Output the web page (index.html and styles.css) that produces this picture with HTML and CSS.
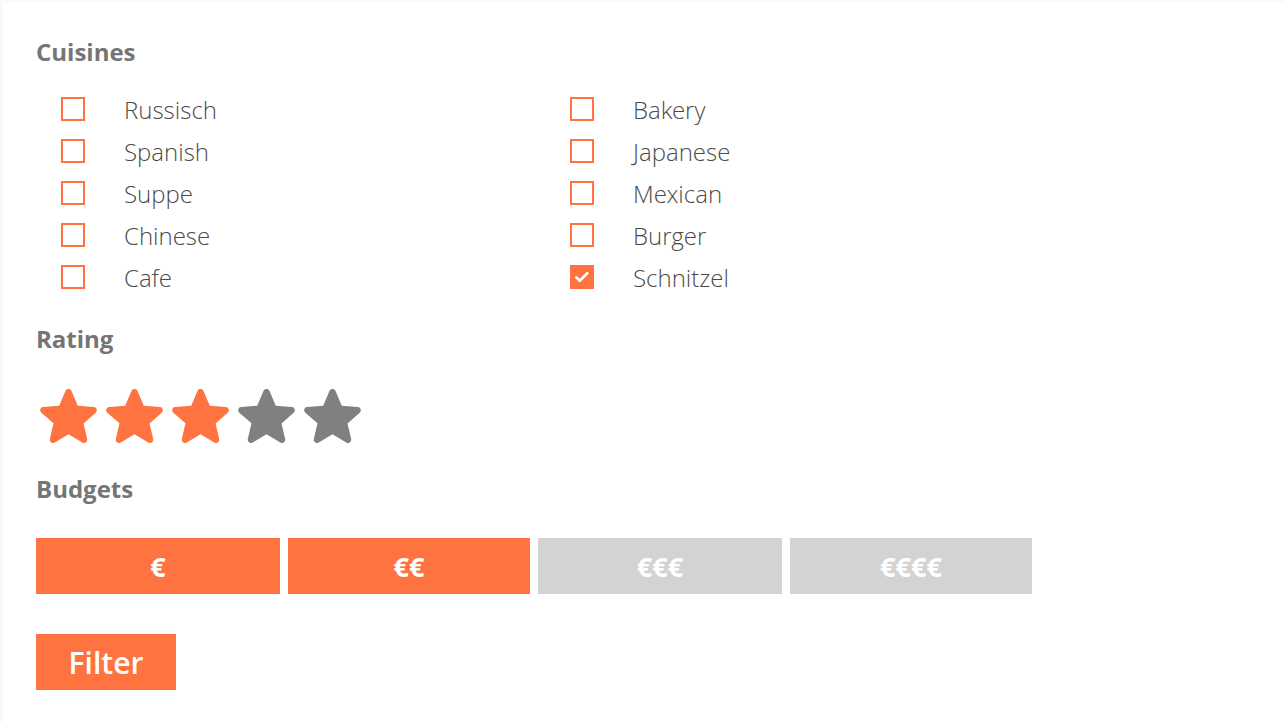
FILE: index.html
```html
<!DOCTYPE html>
<html>
<head>
<meta charset="utf-8">
<link rel="stylesheet" href="styles.css">
</head>
<body>
<div class="panel">
  <h2 class="title">Cuisines</h2>
  <div class="cuisines">
    <label class="opt"><span class="box"></span><span class="lbl">Russisch</span></label>
    <label class="opt"><span class="box"></span><span class="lbl">Bakery</span></label>
    <label class="opt"><span class="box"></span><span class="lbl">Spanish</span></label>
    <label class="opt"><span class="box"></span><span class="lbl">Japanese</span></label>
    <label class="opt"><span class="box"></span><span class="lbl">Suppe</span></label>
    <label class="opt"><span class="box"></span><span class="lbl">Mexican</span></label>
    <label class="opt"><span class="box"></span><span class="lbl">Chinese</span></label>
    <label class="opt"><span class="box"></span><span class="lbl">Burger</span></label>
    <label class="opt"><span class="box"></span><span class="lbl">Cafe</span></label>
    <label class="opt"><span class="box checked"><svg viewBox="0 0 24 24" width="18" height="18"><path d="M4.5 12.5l4.5 4.5 10-10" fill="none" stroke="#fff" stroke-width="3.6" stroke-linecap="round" stroke-linejoin="round"/></svg></span><span class="lbl">Schnitzel</span></label>
  </div>

  <h2 class="title rating-title">Rating</h2>
  <div class="stars">
    <svg class="star on" viewBox="3.4 3.6 17.2 16.3"><path d="M12 17.27l4.15 2.51c.76.46 1.69-.22 1.490-1.08l-1.1-4.72 3.67-3.18c.67-.58.31-1.68-.57-1.75l-4.83-.41-1.89-4.46c-.34-.81-1.5-.81-1.84 0L9.19 8.63l-4.83.41c-.88.07-1.24 1.17-.57 1.75l3.67 3.18-1.1 4.72c-.2.86.73 1.54 1.49 1.08l4.15-2.5z"/></svg>
    <svg class="star on" viewBox="3.4 3.6 17.2 16.3"><path d="M12 17.27l4.15 2.51c.76.46 1.69-.22 1.49-1.08l-1.1-4.72 3.67-3.18c.67-.58.31-1.68-.57-1.75l-4.83-.41-1.89-4.46c-.34-.81-1.5-.81-1.84 0L9.19 8.63l-4.83.41c-.88.07-1.24 1.17-.57 1.75l3.67 3.18-1.1 4.72c-.2.86.73 1.54 1.49 1.08l4.15-2.5z"/></svg>
    <svg class="star on" viewBox="3.4 3.6 17.2 16.3"><path d="M12 17.27l4.15 2.51c.76.46 1.69-.22 1.49-1.08l-1.1-4.72 3.67-3.18c.67-.58.31-1.68-.57-1.75l-4.83-.41-1.89-4.46c-.34-.81-1.5-.81-1.84 0L9.19 8.63l-4.83.41c-.88.07-1.24 1.17-.57 1.75l3.67 3.18-1.1 4.72c-.2.86.73 1.54 1.49 1.08l4.15-2.5z"/></svg>
    <svg class="star" viewBox="3.4 3.6 17.2 16.3"><path d="M12 17.27l4.15 2.51c.76.46 1.69-.22 1.49-1.08l-1.1-4.72 3.67-3.18c.67-.58.31-1.68-.57-1.75l-4.83-.41-1.89-4.46c-.34-.81-1.5-.81-1.84 0L9.19 8.63l-4.83.41c-.88.07-1.24 1.17-.57 1.75l3.67 3.18-1.1 4.72c-.2.86.73 1.54 1.49 1.08l4.15-2.5z"/></svg>
    <svg class="star" viewBox="3.4 3.6 17.2 16.3"><path d="M12 17.27l4.15 2.51c.76.46 1.69-.22 1.49-1.08l-1.1-4.72 3.67-3.18c.67-.58.31-1.68-.57-1.75l-4.83-.41-1.89-4.46c-.34-.81-1.5-.81-1.84 0L9.19 8.63l-4.83.41c-.88.07-1.24 1.17-.57 1.75l3.67 3.18-1.1 4.72c-.2.86.73 1.54 1.49 1.08l4.15-2.5z"/></svg>
  </div>

  <h2 class="title budget-title">Budgets</h2>
  <div class="budgets">
    <button class="budget on">€</button>
    <button class="budget on">€€</button>
    <button class="budget">€€€</button>
    <button class="budget">€€€€</button>
  </div>

  <button class="filter">Filter</button>
</div>
</body>
</html>
```

FILE: styles.css
```css
html, body {
  margin: 0;
  padding: 0;
  background: #f9f9f9;
  font-family: "Open Sans", "Liberation Sans", sans-serif;
}
.panel {
  margin: 2px 0 0 3px;
  background: #ffffff;
  height: 720px;
  padding: 34px 0 0 33px;
  box-sizing: border-box;
}
.title {
  margin: 0;
  font-size: 24px;
  line-height: 32px;
  font-weight: 700;
  color: #757575;
}
.cuisines {
  margin-top: 20px;
  display: grid;
  grid-template-columns: 509px 509px;
}
.opt {
  display: flex;
  align-items: center;
  height: 42px;
  padding-left: 25px;
}
.box {
  width: 24px;
  height: 24px;
  box-sizing: border-box;
  border: 2px solid #ff7340;
  display: flex;
  align-items: center;
  justify-content: center;
  flex: none;
}
.box.checked {
  background: #ff7340;
}
.lbl {
  margin-left: 39px;
  font-family: "Open Sans Light", "Open Sans", "Liberation Sans", sans-serif;
  font-size: 24px;
  font-weight: 300;
  color: #4a4a4a;
}
.rating-title {
  margin-top: 25px;
}
.stars {
  margin-top: 34px;
  display: flex;
  gap: 9px;
  padding-left: 4px;
}
.star {
  width: 57px;
  height: 54px;
  fill: #808080;
}
.star.on {
  fill: #ff7340;
}
.budget-title {
  margin-top: 30px;
}
.budgets {
  margin-top: 33px;
  display: grid;
  grid-template-columns: 244px 242px 244px 242px;
  gap: 8px;
}
.budget {
  height: 56px;
  border: 0;
  background: #d3d3d3;
  color: #ffffff;
  font-family: "Open Sans", "Liberation Sans", sans-serif;
  font-size: 27px;
  font-weight: 700;
  padding: 0;
}
.budget.on {
  background: #ff7340;
}
.filter {
  margin-top: 40px;
  width: 140px;
  height: 56px;
  border: 0;
  background: #ff7340;
  color: #ffffff;
  font-family: "Open Sans", "Liberation Sans", sans-serif;
  font-size: 30px;
  font-weight: 600;
  padding: 0;
}
```
